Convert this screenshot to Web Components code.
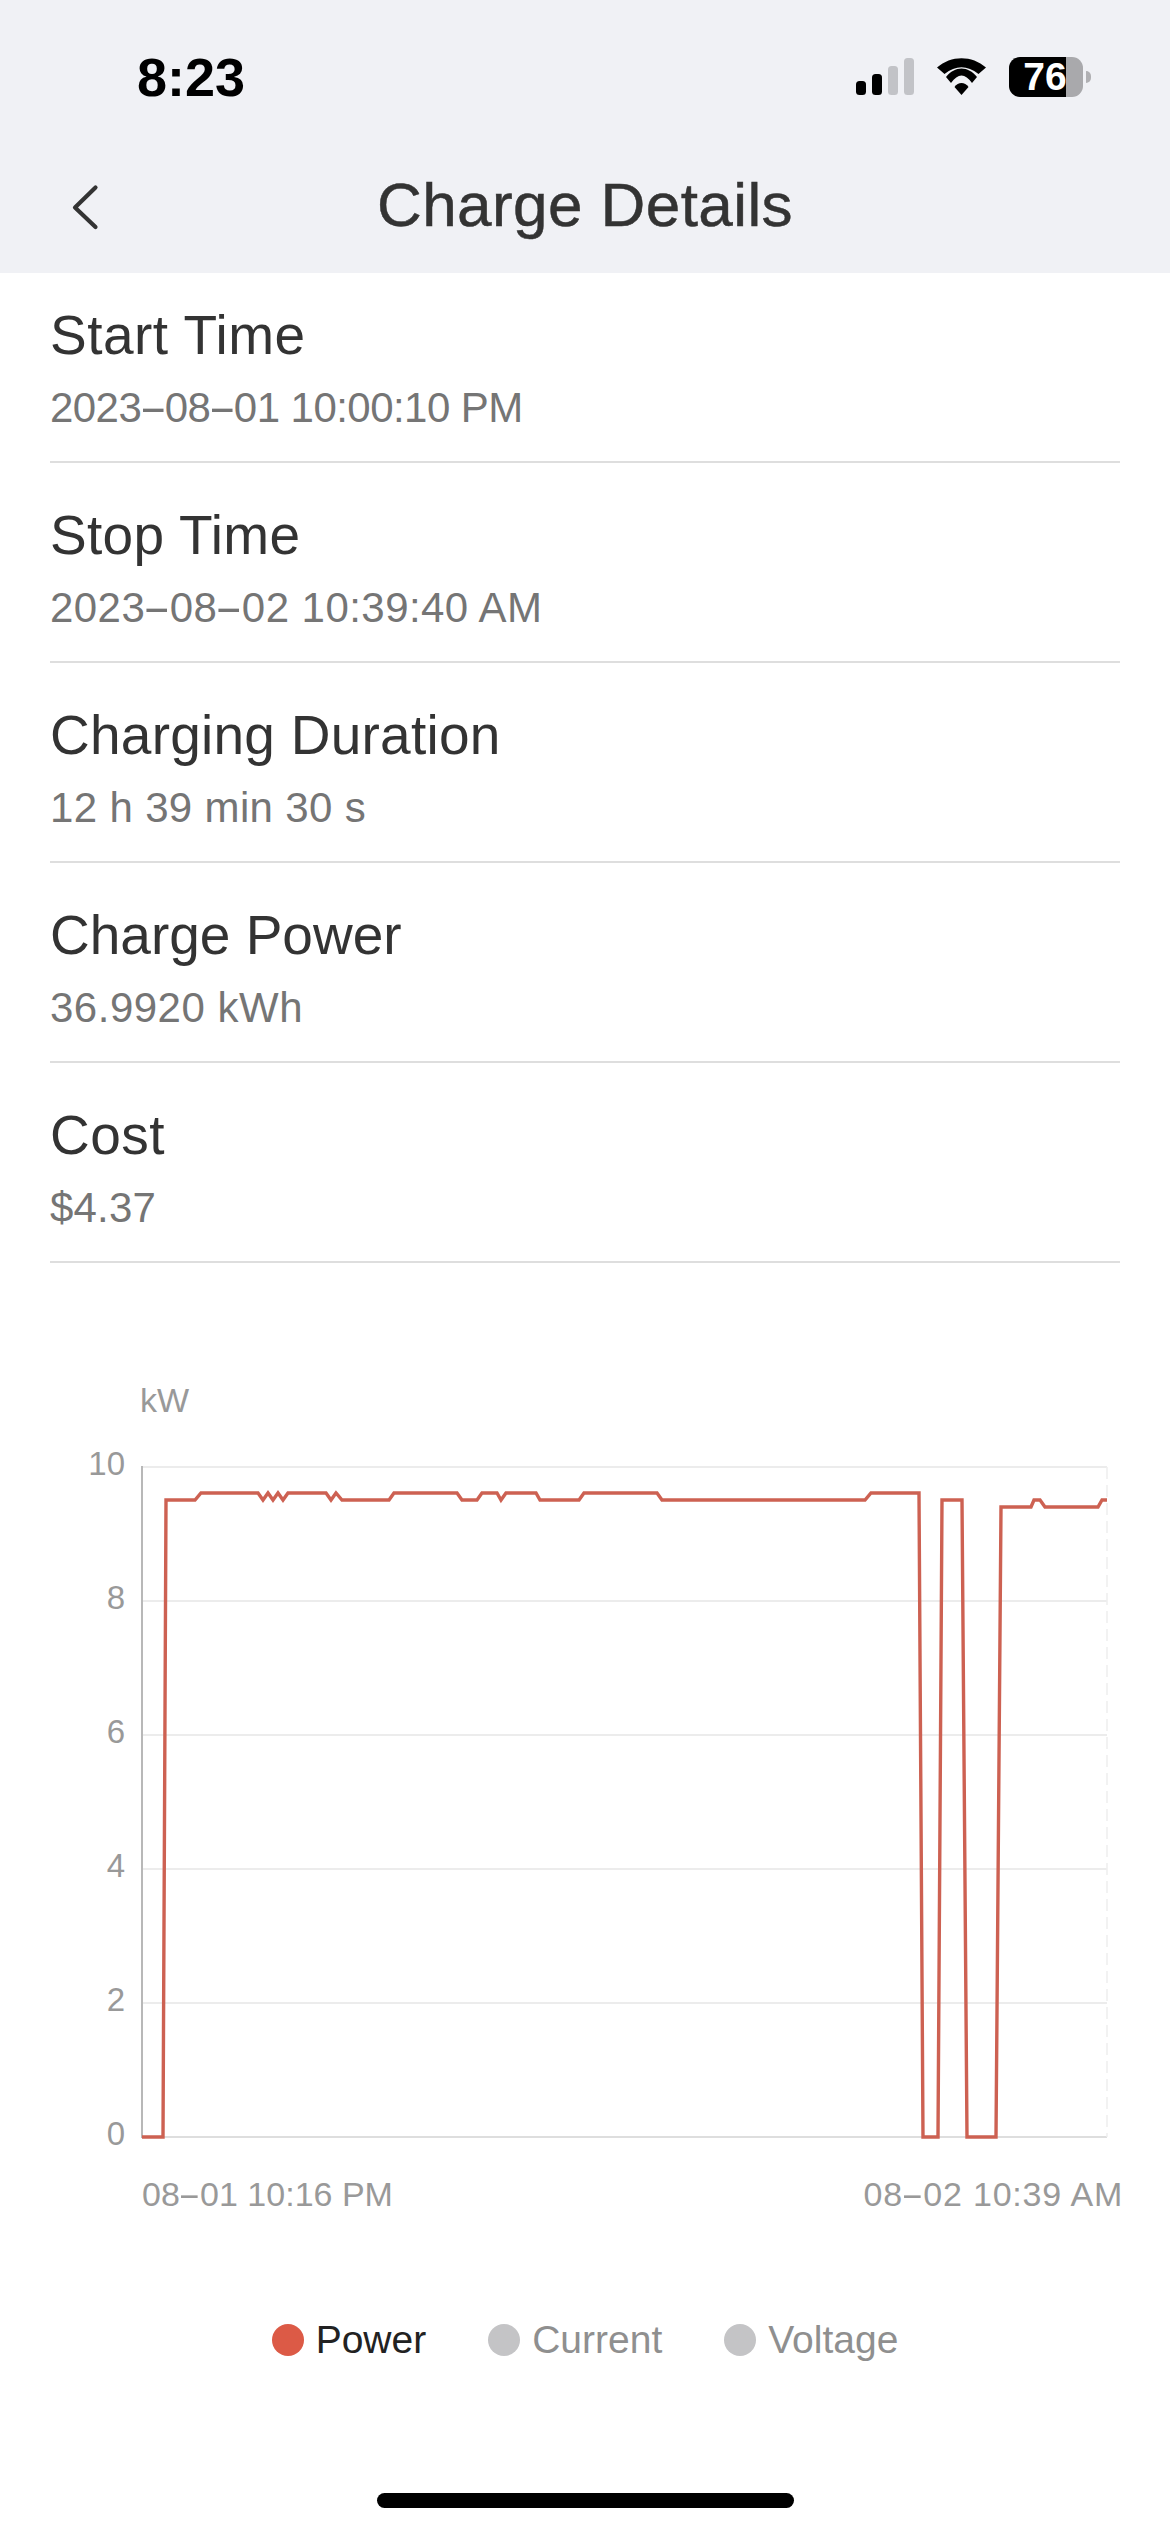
<!DOCTYPE html>
<html lang="en">
<head>
<meta charset="utf-8">
<title>Charge Details</title>
<style>
    html, body { margin: 0; padding: 0; background: #fff; }
    body { font-family: "Liberation Sans", Arial, sans-serif; }
</style>
</head>
<body>
<charge-screen>
    <status-bar time="8:23" battery="76"></status-bar>
    <nav-header>Charge Details</nav-header>
    <detail-list>
        <detail-row style="--label-ls:.5px;--value-ls:-.55px" label="Start Time" value="2023-08-01 10:00:10 PM"></detail-row>
        <detail-row style="--label-ls:.3px;--value-ls:.45px" label="Stop Time" value="2023-08-02 10:39:40 AM"></detail-row>
        <detail-row style="--label-ls:.25px;--value-ls:.35px" label="Charging Duration" value="12 h 39 min 30 s"></detail-row>
        <detail-row style="--label-ls:0;--value-ls:.5px" label="Charge Power" value="36.9920 kWh"></detail-row>
        <detail-row style="--label-ls:.5px;--value-ls:.2px" label="Cost" value="$4.37"></detail-row>
    </detail-list>
    <power-chart></power-chart>
    <chart-legend>
        <legend-item color="#dc5a46" active>Power</legend-item>
        <legend-item color="#c4c4c6">Current</legend-item>
        <legend-item color="#c4c4c6">Voltage</legend-item>
    </chart-legend>
    <home-indicator></home-indicator>
</charge-screen>

<script>
// the app font draws a much wider hyphen than Liberation Sans
const widenDashes = text => text.replace(/-/g, '<span class="dash">-</span>');
const DASH_CSS = `.dash { display: inline-block; transform: scaleX(2); margin: 0 .12em; }`;

class ChargeScreen extends HTMLElement {
    constructor() {
        super();
        this.attachShadow({ mode: 'open' });
        this.shadowRoot.innerHTML = `
            <style>
                :host { display: flex; flex-direction: column; width: 1170px; height: 2532px; overflow: hidden; background: #fff; }
            </style>
            <slot></slot>
        `;
    }
}

class StatusBar extends HTMLElement {
    constructor() {
        super();
        this.attachShadow({ mode: 'open' });
    }

    connectedCallback() {
        this.shadowRoot.innerHTML = `
            <style>
                :host { display: flex; align-items: center; justify-content: space-between; height: 153px; box-sizing: border-box; padding: 0 79px 0 137px; background: #f0f1f5; }
                .time { font: 700 54px/1 "Liberation Sans", sans-serif; color: #000; }
                .icons { display: flex; align-items: center; }
                svg { display: block; }
                .signal { margin-right: 23px; }
                .wifi { margin-right: 23px; }
                .battery { display: flex; align-items: center; }
                .body { width: 74px; height: 40px; border-radius: 11px; overflow: hidden; display: flex; justify-content: center; align-items: center; box-sizing: border-box; padding-right: 2px;
                        background: linear-gradient(90deg, #000 0 57px, #a9a9ac 57px); color: #fff; font: 700 39px/1 "Liberation Sans", sans-serif; }
                .cap { width: 5px; height: 12px; margin-left: 3px; background: #b0b0b3; border-radius: 0 6px 6px 0; }
            </style>
            <span class="time">${this.getAttribute('time')}</span>
            <div class="icons">
                <svg class="signal" width="58" height="37" viewBox="0 0 58 37">
                    <rect x="0" y="23" width="10" height="14" rx="3.5" fill="#000"/>
                    <rect x="16" y="16" width="10" height="21" rx="3.5" fill="#000"/>
                    <rect x="32" y="8" width="10" height="29" rx="3.5" fill="#c2c3c7"/>
                    <rect x="48" y="0" width="10" height="37" rx="3.5" fill="#c2c3c7"/>
                </svg>
                <svg class="wifi" width="49" height="37" viewBox="0 0 49 37">
                    <path d="M0 9.5 C14 -3 35 -3 49 9.5 L41.5 16 C30 7 19 7 7.5 16 Z" fill="#000"/>
                    <path d="M9 19 C18 7.5 31 7.5 40 19 L35 25 C28 15 21 15 14 25 Z" fill="#000"/>
                    <path d="M17.5 29 C21 23.5 28 23.5 31.5 29 L24.5 37 Z" fill="#000"/>
                </svg>
                <div class="battery">
                    <div class="body">${this.getAttribute('battery')}</div>
                    <div class="cap"></div>
                </div>
            </div>
        `;
    }
}

class NavHeader extends HTMLElement {
    constructor() {
        super();
        this.attachShadow({ mode: 'open' });
        this.shadowRoot.innerHTML = `
            <style>
                :host { display: flex; align-items: center; justify-content: center; position: relative; height: 120px; background: #f0f1f5; }
                .title { font: 400 62px/1 "Liberation Sans", sans-serif; letter-spacing: .43px; color: #333; -webkit-text-stroke: .5px #333; position: relative; top: -8px; }
                svg { position: absolute; left: 70px; top: 31px; }
            </style>
            <svg width="30" height="46" viewBox="0 0 30 46" fill="none">
                <path d="M25.5 3.5 L5 23.5 L25.5 43" stroke="#333" stroke-width="4.2" stroke-linecap="round" stroke-linejoin="round"/>
            </svg>
            <span class="title"><slot></slot></span>
        `;
    }
}

class DetailList extends HTMLElement {
    constructor() {
        super();
        this.attachShadow({ mode: 'open' });
        this.shadowRoot.innerHTML = `
            <style>
                /* the list is scrolled up a little: the first row is cut off under the header */
                :host { display: block; height: 990px; overflow: hidden; }
                .inner { margin-top: -10px; padding: 0 50px; display: flex; flex-direction: column; }
            </style>
            <div class="inner"><slot></slot></div>
        `;
    }
}

class DetailRow extends HTMLElement {
    constructor() {
        super();
        this.attachShadow({ mode: 'open' });
    }

    connectedCallback() {
        this.shadowRoot.innerHTML = `
            <style>
                :host { display: flex; flex-direction: column; height: 200px; box-sizing: border-box; border-bottom: 2px solid #dedede; padding-top: 41px; }
                .label { font: 400 55px/62px "Liberation Sans", sans-serif; letter-spacing: var(--label-ls, 0); color: #333; }
                .value { font: 400 42px/48px "Liberation Sans", sans-serif; letter-spacing: var(--value-ls, 0); color: #757575; margin-top: 18px; }
                ${DASH_CSS}
            </style>
            <div class="label">${this.getAttribute('label')}</div>
            <div class="value">${widenDashes(this.getAttribute('value'))}</div>
        `;
    }
}

// points measured from the curve, [x, y] in page px of the chart box
const POWER_POINTS = [
    [142,2137],[163,2137],[166,1500],[195,1500],[201,1493],[258,1493],[263,1500],[268,1493],[273,1500],
    [278,1493],[283,1500],[288,1493],[326,1493],[331,1500],[336,1493],[342,1500],[389,1500],[394,1493],
    [457,1493],[462,1500],[477,1500],[482,1493],[497,1493],[501,1500],[506,1493],[536,1493],[540,1500],
    [579,1500],[584,1493],[657,1493],[662,1500],[865,1500],[871,1493],[919,1493],[923,2137],[938,2137],
    [942,1500],[962,1500],[967,2137],[996,2137],[1001,1507],[1031,1507],[1034,1500],[1040,1500],
    [1045,1507],[1098,1507],[1102,1500],[1107,1500]
];
const CHART_TOP = 1263;

class PowerChart extends HTMLElement {
    constructor() {
        super();
        this.attachShadow({ mode: 'open' });
    }

    connectedCallback() {
        const ticks = [[10,1467],[8,1601],[6,1735],[4,1869],[2,2003],[0,2137]];
        const y = v => v - CHART_TOP;
        const points = POWER_POINTS.map(p => `${p[0]},${y(p[1])}`).join(' ');
        const grid = ticks.map(t => `<line x1="142" x2="1107" y1="${y(t[1])}" y2="${y(t[1])}" stroke="${t[0] === 0 ? '#dedede' : '#ececec'}" stroke-width="2"/>`).join('');
        const labels = ticks.map(t => `<text x="125" y="${y(t[1]) + 8}" text-anchor="end">${t[0]}</text>`).join('');
        this.shadowRoot.innerHTML = `
            <style>
                :host { display: block; }
                svg { display: block; }
                text { font: 400 33px "Liberation Sans", sans-serif; fill: #999; }
                .x-labels { display: flex; justify-content: space-between; height: 40px; padding: 0 47px 0 142px; font: 400 34px/40px "Liberation Sans", sans-serif; color: #999; }
                .x-labels span:last-child { letter-spacing: .8px; }
                ${DASH_CSS}
            </style>
            <svg width="1170" height="911" viewBox="0 0 1170 911">
                ${grid}
                <line x1="1107" x2="1107" y1="${y(1467)}" y2="${y(2137)}" stroke="#eeeeee" stroke-width="1.5" stroke-dasharray="12 6"/>
                <line x1="142" x2="142" y1="${y(1466)}" y2="${y(2138)}" stroke="#b8b8b8" stroke-width="2"/>
                ${labels}
                <text x="140" y="${y(1412)}" style="font-size:34px">kW</text>
                <polyline points="${points}" fill="none" stroke="#cd6152" stroke-width="3.4" stroke-linejoin="miter"/>
            </svg>
            <div class="x-labels">
                <span>${widenDashes('08-01 10:16 PM')}</span>
                <span>${widenDashes('08-02 10:39 AM')}</span>
            </div>
        `;
    }
}

class ChartLegend extends HTMLElement {
    constructor() {
        super();
        this.attachShadow({ mode: 'open' });
        this.shadowRoot.innerHTML = `
            <style>
                :host { display: flex; justify-content: center; gap: 62px; padding-top: 104px; }
            </style>
            <slot></slot>
        `;
    }
}

class LegendItem extends HTMLElement {
    constructor() {
        super();
        this.attachShadow({ mode: 'open' });
    }

    connectedCallback() {
        const active = this.hasAttribute('active');
        this.shadowRoot.innerHTML = `
            <style>
                :host { display: flex; align-items: center; gap: 12px; font: 400 39px/44px "Liberation Sans", sans-serif; color: ${active ? '#222' : '#8f8f8f'}; }
                i { display: block; width: 32px; height: 32px; border-radius: 50%; background: ${this.getAttribute('color')}; }
            </style>
            <i></i><span><slot></slot></span>
        `;
    }
}

class HomeIndicator extends HTMLElement {
    constructor() {
        super();
        this.attachShadow({ mode: 'open' });
        this.shadowRoot.innerHTML = `
            <style>
                :host { display: block; width: 417px; height: 15px; margin: 131px auto 0; border-radius: 8px; background: #000; }
            </style>
        `;
    }
}

customElements.define('charge-screen', ChargeScreen);
customElements.define('status-bar', StatusBar);
customElements.define('nav-header', NavHeader);
customElements.define('detail-list', DetailList);
customElements.define('detail-row', DetailRow);
customElements.define('power-chart', PowerChart);
customElements.define('chart-legend', ChartLegend);
customElements.define('legend-item', LegendItem);
customElements.define('home-indicator', HomeIndicator);
</script>
</body>
</html>
